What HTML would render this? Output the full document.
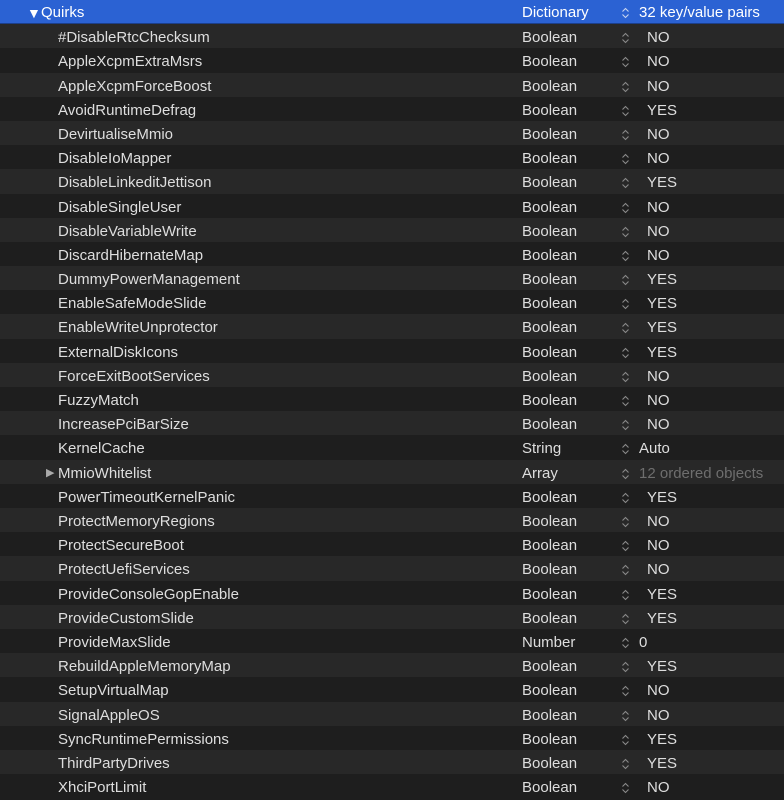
<!DOCTYPE html>
<html><head><meta charset="utf-8"><style>
html,body{margin:0;padding:0;background:#1e1e1e;width:784px;height:800px;overflow:hidden;font-family:"Liberation Sans",Arial,sans-serif;font-size:15px;color:#dedede}
.r{position:absolute;left:0;width:784px;height:24.19px;line-height:24.19px}
.l{background:#282828}.d{background:#1e1e1e}
.h{background:#2b62d3;color:#fff;border-bottom:1px solid #1c3f8a;box-sizing:border-box}
.k{position:absolute;left:58px;top:2px}
.t{position:absolute;left:522px;top:2px}
.s{position:absolute;left:621px;top:7px;width:9px;height:14px}
.v{position:absolute;left:647px;top:2px}
.va{position:absolute;left:639px;top:2px}
.g{color:#6e6e6e}
</style></head><body>
<div class="r h" style="top:0"><span style="position:absolute;left:27px;top:1px;font-size:14px">▼</span><span style="position:absolute;left:41px;top:1px">Quirks</span><span class="t" style="top:1px">Dictionary</span><svg class="s" style="top:6px" viewBox="0 0 9 14"><path d="M1.5 5.5 L4.5 2.5 L7.5 5.5 M1.5 8.5 L4.5 11.5 L7.5 8.5" fill="none" stroke="#c8d4f0" stroke-width="1.1"/></svg><span class="va" style="top:1px">32 key/value pairs</span></div>
<div id="rows"></div>
<script>
var data=[["#DisableRtcChecksum","Boolean","NO"],["AppleXcpmExtraMsrs","Boolean","NO"],["AppleXcpmForceBoost","Boolean","NO"],["AvoidRuntimeDefrag","Boolean","YES"],["DevirtualiseMmio","Boolean","NO"],["DisableIoMapper","Boolean","NO"],["DisableLinkeditJettison","Boolean","YES"],["DisableSingleUser","Boolean","NO"],["DisableVariableWrite","Boolean","NO"],["DiscardHibernateMap","Boolean","NO"],["DummyPowerManagement","Boolean","YES"],["EnableSafeModeSlide","Boolean","YES"],["EnableWriteUnprotector","Boolean","YES"],["ExternalDiskIcons","Boolean","YES"],["ForceExitBootServices","Boolean","NO"],["FuzzyMatch","Boolean","NO"],["IncreasePciBarSize","Boolean","NO"],["KernelCache","String","Auto"],["MmioWhitelist","Array","12 ordered objects"],["PowerTimeoutKernelPanic","Boolean","YES"],["ProtectMemoryRegions","Boolean","NO"],["ProtectSecureBoot","Boolean","NO"],["ProtectUefiServices","Boolean","NO"],["ProvideConsoleGopEnable","Boolean","YES"],["ProvideCustomSlide","Boolean","YES"],["ProvideMaxSlide","Number","0"],["RebuildAppleMemoryMap","Boolean","YES"],["SetupVirtualMap","Boolean","NO"],["SignalAppleOS","Boolean","NO"],["SyncRuntimePermissions","Boolean","YES"],["ThirdPartyDrives","Boolean","YES"],["XhciPortLimit","Boolean","NO"]];
var h="";
data.forEach(function(d,i){var n=i+1;var top=(24.19*n).toFixed(2);
var bool=d[1]=="Boolean";
var vc=bool?"v":"va";var g=d[1]=="Array"?" g":"";
var arrow=d[1]=="Array"?'<span style="position:absolute;left:46px;top:1px;font-size:11px;color:#aaa">▶</span>':'';
h+='<div class="r '+(n%2?'l':'d')+'" style="top:'+top+'px">'+arrow+'<span class="k">'+d[0]+'</span><span class="t">'+d[1]+'</span><svg class="s" viewBox="0 0 9 14"><path d="M1.5 5.5 L4.5 2.5 L7.5 5.5 M1.5 8.5 L4.5 11.5 L7.5 8.5" fill="none" stroke="#8a8a8a" stroke-width="1.1"/></svg><span class="'+vc+g+'">'+d[2]+'</span></div>';});
document.getElementById("rows").innerHTML=h;
</script>
</body></html>
